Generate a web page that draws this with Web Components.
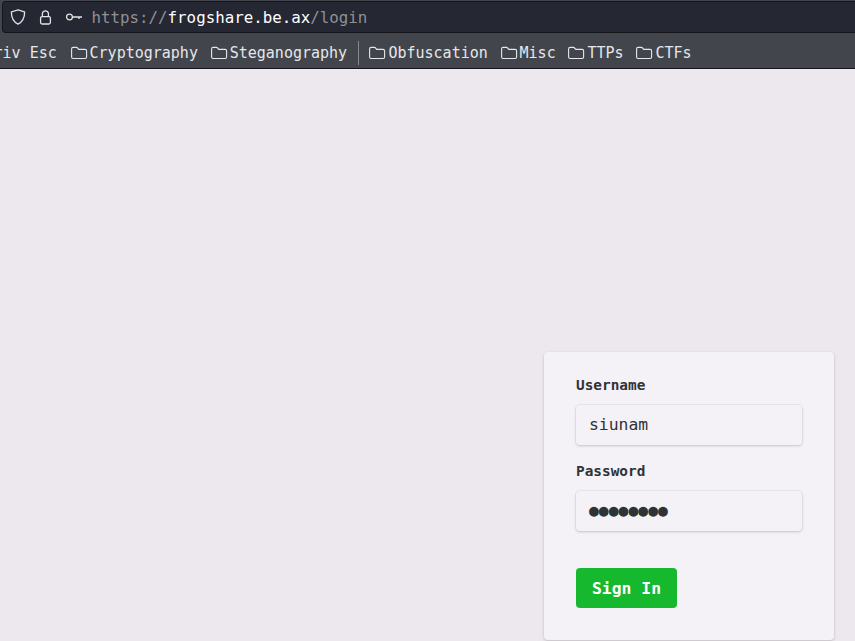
<!DOCTYPE html>
<html lang="en">
  <head>
    <meta charset="UTF-8" />
    <title>Login</title>
    <style>
      html, body { margin: 0; height: 100%; }
      body {
        display: flex;
        flex-direction: column;
        height: 641px;
        overflow: hidden;
        background: #ede8ee;
        font-family: "DejaVu Sans Mono", "Liberation Mono", monospace;
      }
    </style>
  </head>
  <body>
    <template id="url-bar">
      <style>
        :host { display: block; height: 33px; box-sizing: border-box; padding: 1px 0 0 2px; background: #42454c; }
        .bar {
          display: flex; align-items: center; height: 32px; box-sizing: border-box;
          background: #252732; border: 1px solid #15161b; border-right: 0;
          border-radius: 4px 0 0 4px; padding-left: 7px; color: #fff; font-size: 15.8px;
        }
        svg { flex: none; fill: none; stroke: #e3e4e6; stroke-width: 1.3; }
        .shield { margin-right: 12px; }
        .lock { margin-right: 12px; }
        .key { margin-right: 9.500px; }
        .dim { color: #8f9197; }
      </style>
      <div class="bar">
        <svg class="shield" width="16" height="16" viewBox="0 0 16 16"><path d="M8 .9 14.600 3c.1 5.600-1.600 9.600-6.600 12.100C3 12.600 1.300 8.600 1.400 3Z" /></svg>
        <svg class="lock" width="16" height="16" viewBox="0 0 16 16"><rect x="2.600" y="7.600" width="9.800" height="7.400" rx="1.500" /><path d="M4.400 7.500V4.200a3.100 3.100 0 0 1 6 0v3.300" /></svg>
        <svg class="key" width="16" height="16" viewBox="0 0 16 16"><circle cx="3.500" cy="8" r="2.900" /><path d="M6.400 8H16M13 8v2" /></svg>
        <span><span class="dim">https://</span>frogshare.be.ax<span class="dim">/login</span></span>
      </div>
    </template>

    <template id="bookmark-bar">
      <style>
        :host {
          display: flex; align-items: center; height: 36px; box-sizing: border-box;
          background: #42454c; border-bottom: 1px solid #15161b; color: #e6e7e9;
          font-size: 15px; white-space: nowrap; overflow: hidden; padding-top: 4px;
        }
        ::slotted(.cut) { margin-left: -15.500px; margin-right: 1px; }
        ::slotted(.sep) { width: 1px; height: 24px; margin: 0 -1.900px 0 10.400px; background: #85878c; }
      </style>
      <slot></slot>
    </template>

    <template id="bookmark-item">
      <style>
        :host { display: flex; align-items: center; gap: 2px; margin-left: 12.800px; }
        svg { flex: none; fill: none; stroke: #e6e7e9; stroke-width: 1.100; }
      </style>
      <svg width="17" height="16" viewBox="0 0 17 16"><path d="M.6 3.900c0-.9.600-1.500 1.500-1.500h3.300c.6 0 1 .3 1.300.7l1 1.300h6.400c.9 0 1.500.6 1.500 1.500v6.100c0 .9-.6 1.500-1.500 1.500H2.100c-.9 0-1.500-.6-1.500-1.500Z" /></svg>
      <slot></slot>
    </template>

    <template id="login-card">
      <style>
        :host {
          display: flex; flex-direction: column; box-sizing: border-box;
          width: 290px; height: 288px; padding: 24px 32px 0;
          background: #f4f2f6; border-radius: 4px;
          box-shadow: 0 1px 3px rgba(0, 0, 0, .2);
        }
      </style>
      <slot></slot>
    </template>

    <template id="form-field">
      <style>
        :host { display: block; margin-bottom: 17px; color: #2f3336; }
        label { display: block; font-size: 14.400px; font-weight: 700; line-height: 18px; margin-bottom: 11px; }
        .box {
          height: 40px; box-sizing: border-box; padding: 0 0 2px 13px; display: flex; align-items: center;
          font-size: 16.400px; border-radius: 4px; background: #f4f2f6;
          box-shadow: 0 0 0 1px rgba(0, 0, 0, .04), 0 1px 3px rgba(0, 0, 0, .16);
        }
      </style>
      <label><slot name="label"></slot></label>
      <div class="box"><slot></slot></div>
    </template>

    <template id="sign-button">
      <style>
        :host {
          display: inline-flex; align-self: flex-start; align-items: center; justify-content: center;
          width: 101px; height: 40px; margin-top: 20px; border-radius: 4px;
          background: #16b82e; color: #fff; font-size: 16.400px; font-weight: 700;
        }
      </style>
      <slot></slot>
    </template>

    <template id="page-main">
      <style>
        :host { flex: 1; display: flex; justify-content: flex-end; padding: 283px 21px 0 0; }
      </style>
      <slot></slot>
    </template>

    <script>
      const define = (name) => {
        customElements.define(name, class extends HTMLElement {
          constructor() {
            super();
            this.attachShadow({ mode: "open" }).appendChild(
              document.getElementById(name).content.cloneNode(true)
            );
          }
        });
      };
      ["url-bar", "bookmark-bar", "bookmark-item", "login-card", "form-field", "sign-button", "page-main"].forEach(define);
    </script>

    <url-bar></url-bar>
    <bookmark-bar>
      <span class="cut">Priv Esc</span>
      <bookmark-item>Cryptography</bookmark-item>
      <bookmark-item>Steganography</bookmark-item>
      <span class="sep"></span>
      <bookmark-item>Obfuscation</bookmark-item>
      <bookmark-item>Misc</bookmark-item>
      <bookmark-item>TTPs</bookmark-item>
      <bookmark-item>CTFs</bookmark-item>
    </bookmark-bar>
    <page-main>
      <login-card>
        <form-field><span slot="label">Username</span>siunam</form-field>
        <form-field><span slot="label">Password</span>●●●●●●●●</form-field>
        <sign-button>Sign In</sign-button>
      </login-card>
    </page-main>
  </body>
</html>
